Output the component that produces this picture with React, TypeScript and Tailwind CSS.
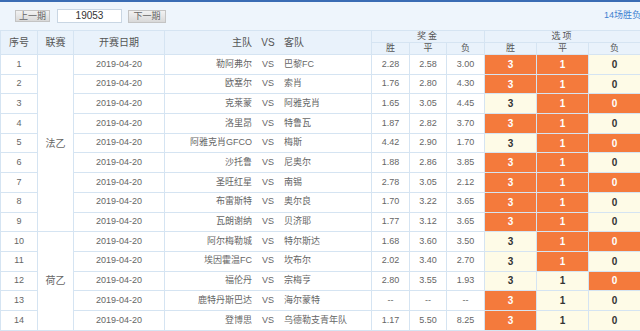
import React from "react";

type Row = {
  no: number;
  home: string;
  away: string;
  odds: [string, string, string];
  pick: [boolean, boolean, boolean];
};

const rows: Row[] = [
  { no: 1, home: "勒阿弗尔", away: "巴黎FC", odds: ["2.28", "2.58", "3.00"], pick: [true, true, false] },
  { no: 2, home: "欧塞尔", away: "索肖", odds: ["1.76", "2.80", "4.30"], pick: [true, true, false] },
  { no: 3, home: "克莱蒙", away: "阿雅克肖", odds: ["1.65", "3.05", "4.45"], pick: [false, true, true] },
  { no: 4, home: "洛里昂", away: "特鲁瓦", odds: ["1.87", "2.82", "3.70"], pick: [true, true, false] },
  { no: 5, home: "阿雅克肖GFCO", away: "梅斯", odds: ["4.42", "2.90", "1.70"], pick: [false, true, true] },
  { no: 6, home: "沙托鲁", away: "尼奥尔", odds: ["1.88", "2.86", "3.85"], pick: [true, true, false] },
  { no: 7, home: "圣旺红星", away: "南锡", odds: ["2.78", "3.05", "2.12"], pick: [true, true, true] },
  { no: 8, home: "布雷斯特", away: "奥尔良", odds: ["1.70", "3.22", "3.65"], pick: [true, true, false] },
  { no: 9, home: "瓦朗谢纳", away: "贝济耶", odds: ["1.77", "3.12", "3.65"], pick: [true, true, false] },
  { no: 10, home: "阿尔梅勒城", away: "特尔斯达", odds: ["1.68", "3.60", "3.50"], pick: [false, true, true] },
  { no: 11, home: "埃因霍温FC", away: "坎布尔", odds: ["2.02", "3.40", "2.70"], pick: [false, true, false] },
  { no: 12, home: "福伦丹", away: "宗梅亨", odds: ["2.80", "3.55", "1.93"], pick: [false, false, true] },
  { no: 13, home: "鹿特丹斯巴达", away: "海尔蒙特", odds: ["--", "--", "--"], pick: [true, false, false] },
  { no: 14, home: "登博思", away: "乌德勒支青年队", odds: ["1.17", "5.50", "8.25"], pick: [true, false, false] },
];

const cell = "border border-[#d5e4f2] p-0 text-center";
const optVal = ["3", "1", "0"];

export default function App() {
  return (
    <div
      className="w-[640px] h-[331px] overflow-hidden bg-[#eef5fc] text-[9px] text-[#666]"
      style={{ fontFamily: '"Liberation Sans", "Noto Sans CJK SC", sans-serif' }}
    >
      <div className="h-[2px] bg-[#3a6cb4]" />
      {/* pager */}
      <div className="h-[28px] flex items-center pl-[15px] relative">
        <button className="w-[35px] h-[12px] leading-[10px] text-[9px] text-[#666] bg-gradient-to-b from-[#f2f2f2] to-[#d9d9d9] border border-[#c4c4c4]">
          上一期
        </button>
        <div className="ml-[7px] w-[65px] h-[14px] bg-white border border-[#c9d6e3] text-[10px] leading-[12px] text-[#333] text-center">
          19053
        </div>
        <button className="ml-[6px] w-[38px] h-[13px] leading-[11px] text-[9px] text-[#666] bg-gradient-to-b from-[#f2f2f2] to-[#d9d9d9] border border-[#c4c4c4]">
          下一期
        </button>
        <span className="absolute left-[604px] top-[7px] text-[9px] text-[#3f7fd0] whitespace-nowrap">14场胜负玩</span>
      </div>

      <table className="table-fixed border-collapse w-[640px]">
        <colgroup>
          <col className="w-[37px]" />
          <col className="w-[36px]" />
          <col className="w-[91px]" />
          <col className="w-[207px]" />
          <col className="w-[38px]" />
          <col className="w-[37px]" />
          <col className="w-[38px]" />
          <col className="w-[52px]" />
          <col className="w-[52px]" />
          <col className="w-[52px]" />
        </colgroup>
        <thead className="bg-[#e9f2fb] text-[#555]">
          <tr className="h-[12px]">
            <th rowSpan={2} className={`${cell} font-normal text-[10px]`}>序号</th>
            <th rowSpan={2} className={`${cell} font-normal text-[10px]`}>联赛</th>
            <th rowSpan={2} className={`${cell} font-normal text-[10px]`}>开赛日期</th>
            <th rowSpan={2} className={`${cell} font-normal text-[10px]`}>
              <div className="flex">
                <span className="w-[87px] text-right">主队</span>
                <span className="w-[32px] text-center">VS</span>
                <span>客队</span>
              </div>
            </th>
            <th colSpan={3} className={`${cell} font-normal text-[9px] leading-[11px] tracking-[2px]`}>奖金</th>
            <th colSpan={3} className={`${cell} font-normal text-[9px] leading-[11px] tracking-[2px]`}>选项</th>
          </tr>
          <tr className="h-[12px]">
            {["胜", "平", "负", "胜", "平", "负"].map((t, i) => (
              <th key={i} className={`${cell} font-normal text-[9px] leading-[11px]`}>{t}</th>
            ))}
          </tr>
        </thead>
        <tbody className="bg-white">
          {rows.map((r) => (
            <tr key={r.no} className="h-[19.7px]">
              <td className={cell}>{r.no}</td>
              {r.no === 1 && (
                <td rowSpan={9} className={`${cell} text-[10px]`}>法乙</td>
              )}
              {r.no === 10 && (
                <td rowSpan={5} className={`${cell} text-[10px]`}>荷乙</td>
              )}
              <td className={cell}>2019-04-20</td>
              <td className={`${cell} whitespace-nowrap`}>
                <div className="flex">
                  <span className="w-[87px] text-right">{r.home}</span>
                  <span className="w-[32px] text-center">VS</span>
                  <span>{r.away}</span>
                </div>
              </td>
              {r.odds.map((o, i) => (
                <td key={i} className={cell}>{o}</td>
              ))}
              {r.pick.map((p, i) => (
                <td
                  key={i}
                  className={`${cell} font-bold text-[10px] ${p ? "bg-[#f47a3c] text-white" : "bg-[#fefbe7] text-[#333]"}`}
                >
                  {optVal[i]}
                </td>
              ))}
            </tr>
          ))}
        </tbody>
      </table>
    </div>
  );
}
